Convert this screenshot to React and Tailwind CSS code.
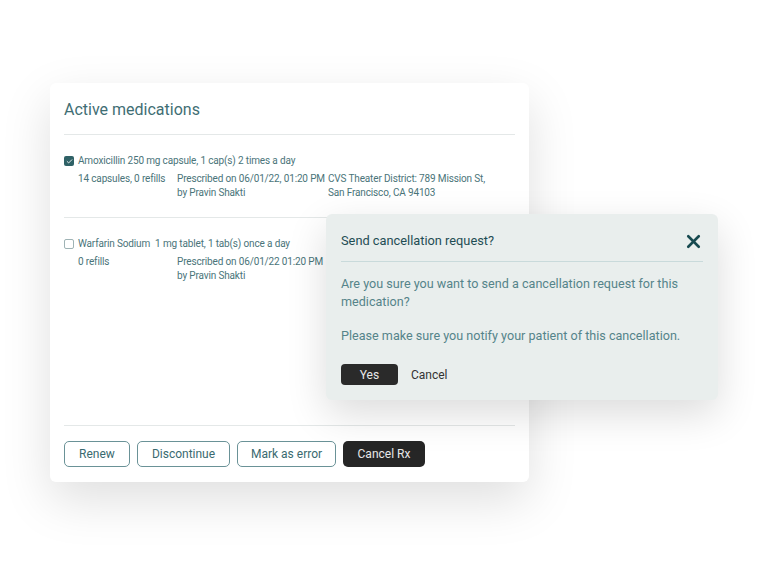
import { Check, X } from 'lucide-react';

const font = { fontFamily: 'Roboto, "Noto Sans", sans-serif' };

function MedRow({ checked, name, dose, refills, prescribed, pharmacy }) {
  return (
    <div className="pt-[19px] pb-[17px] tracking-[-0.15px]">
      <div className="flex items-center gap-[4px] text-[10px] leading-[14px] text-[#4a7479]">
        {checked ? (
          <span className="w-[10px] h-[10px] rounded-[2px] bg-[#2f6166] flex items-center justify-center">
            <Check size={7} strokeWidth={3} className="text-white" />
          </span>
        ) : (
          <span className="w-[10px] h-[10px] rounded-[2px] border border-[#9fb3b5] bg-white" />
        )}
        <span>{name}</span>
        {dose && <span className="ml-[1px]">{dose}</span>}
      </div>
      <div className="flex pl-[14px] mt-[4px] text-[10px] leading-[14px] text-[#4a7479]">
        <div className="w-[99px] shrink-0">{refills}</div>
        <div className="w-[151px] shrink-0 whitespace-nowrap">
          {prescribed}
          <br />
          by Pravin Shakti
        </div>
        {pharmacy && (
          <div className="whitespace-nowrap">
            CVS Theater District: 789 Mission St,
            <br />
            San Francisco, CA 94103
          </div>
        )}
      </div>
    </div>
  );
}

export default function App() {
  return (
    <div className="relative w-[768px] h-[565px] bg-white overflow-hidden" style={font}>
      <div className="absolute left-[50px] top-[83px] w-[479px] h-[399px] bg-white rounded-[6px] shadow-[0_18px_50px_rgba(0,0,0,0.13)] px-[14px] flex flex-col">
        <h1 className="pt-[17px] pb-[14px] text-[16px] leading-[20px] text-[#3f6e74] font-normal border-b border-[#e4e8e8]">
          Active medications
        </h1>
        <div className="border-b border-[#e4e8e8]">
          <MedRow
            checked
            name="Amoxicillin 250 mg capsule, 1 cap(s) 2 times a day"
            refills="14 capsules, 0 refills"
            prescribed="Prescribed on 06/01/22, 01:20 PM"
            pharmacy
          />
        </div>
        <div className="flex-1 border-b border-[#e4e8e8]">
          <MedRow
            name="Warfarin Sodium"
            dose="1 mg tablet, 1 tab(s) once a day"
            refills="0 refills"
            prescribed="Prescribed on 06/01/22 01:20 PM"
          />
        </div>
        <div className="flex gap-[7px] pt-[15px] pb-[15px] text-[12px]">
          <button className="h-[26px] w-[66px] rounded-[5px] border border-[#6a9297] text-[#3a6a70]">Renew</button>
          <button className="h-[26px] w-[93px] rounded-[5px] border border-[#6a9297] text-[#3a6a70]">Discontinue</button>
          <button className="h-[26px] w-[99px] rounded-[5px] border border-[#6a9297] text-[#3a6a70]">Mark as error</button>
          <button className="h-[26px] w-[82px] rounded-[5px] bg-[#262626] text-[#e8e8e8]">Cancel Rx</button>
        </div>
      </div>

      <div className="absolute left-[326px] top-[214px] w-[392px] h-[186px] bg-[#e9eeed] rounded-[6px] shadow-[0_14px_40px_rgba(0,0,0,0.14)] px-[15px]">
        <div className="flex items-center justify-between pt-[18px] pb-[11px] border-b border-[#c9dadb]">
          <span className="text-[12.8px] leading-[18px] text-[#1f4d54]">Send cancellation request?</span>
          <X size={21} strokeWidth={3} className="text-[#174a50] -mr-[1px] -my-[2px]" />
        </div>
        <p className="mt-[13px] text-[12.6px] leading-[17.5px] text-[#55848a]">
          Are you sure you want to send a cancellation request for this medication?
        </p>
        <p className="mt-[17px] text-[12.6px] leading-[18px] text-[#55848a]">
          Please make sure you notify your patient of this cancellation.
        </p>
        <div className="flex items-center gap-[13px] mt-[19px]">
          <button className="w-[57px] h-[21px] rounded-[4px] bg-[#2a2a2a] text-[#e8e8e8] text-[12px]">Yes</button>
          <span className="text-[12px] text-[#333]">Cancel</span>
        </div>
      </div>
    </div>
  );
}
